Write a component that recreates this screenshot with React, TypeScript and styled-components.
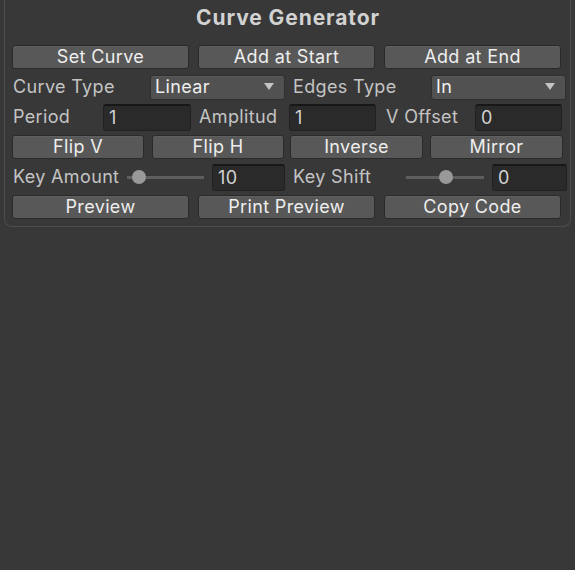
import React from "react";
import styled, { createGlobalStyle } from "styled-components";

const Global = createGlobalStyle`
  html, body { margin: 0; padding: 0; background: #383838; }
  body { font-family: Inter, "Noto Sans", sans-serif; font-size: 18px; color: #c4c4c4; letter-spacing: 0.35px; }
  * { box-sizing: border-box; }
`;

const Page = styled.div`
  width: 575px;
  height: 570px;
  background: #383838;
  padding: 0 4px;
`;

const Panel = styled.div`
  border: 1px solid #4e4e4e;
  border-top: none;
  border-radius: 0 0 8px 8px;
  padding: 0 4px 4px 7px;
  display: flex;
  flex-direction: column;
`;

const Title = styled.div`
  height: 42px;
  display: flex;
  justify-content: center;
  align-items: center;
  padding-bottom: 8px;
  padding-right: 2px;
  font-weight: 700;
  font-size: 21px;
  color: #d2d2d2;
  letter-spacing: 0.9px;
`;

const Row = styled.div<{ $cols: string; $gap?: number }>`
  height: 30px;
  display: grid;
  grid-template-columns: ${(p) => p.$cols};
  column-gap: ${(p) => p.$gap ?? 0}px;
  align-items: center;
`;

const Button = styled.button`
  height: 24px;
  margin: 0;
  padding: 0 0 1px;
  border: 1px solid #2a2a2a;
  border-radius: 3px;
  background: #585858;
  color: #eeeeee;
  font-family: inherit;
  font-size: 18px;
  letter-spacing: 0.35px;
  line-height: 20px;
  text-align: center;
  white-space: nowrap;
  box-shadow: inset 0 1px 0 #606060;
`;

const Label = styled.div`
  color: #c4c4c4;
  font-size: 18px;
  white-space: nowrap;
  overflow: hidden;
  padding: 0 0 2px 1px;
`;

const Dropdown = styled.div`
  height: 25px;
  border: 1px solid #2f2f2f;
  border-radius: 3px;
  background: #515151;
  color: #eeeeee;
  display: flex;
  align-items: center;
  justify-content: space-between;
  padding: 0 10px 1px 4px;
  box-shadow: inset 0 1px 0 #595959;
`;

const Arrow = styled.span`
  width: 0;
  height: 0;
  border-left: 5.5px solid transparent;
  border-right: 5.5px solid transparent;
  border-top: 7px solid #c4c4c4;
`;

const Field = styled.div`
  height: 27px;
  border: 1px solid #212121;
  border-top: 2px solid #171717;
  border-radius: 3px;
  background: #2a2a2a;
  color: #d2d2d2;
  display: flex;
  align-items: center;
  padding: 0 0 1px 5px;
`;

const SliderBox = styled.div`
  position: relative;
  height: 14px;
  display: flex;
  align-items: center;
`;

const Track = styled.div`
  width: 100%;
  height: 3px;
  background: #5e5e5e;
`;

const Thumb = styled.div<{ $at: number }>`
  position: absolute;
  top: 0;
  left: ${(p) => p.$at}px;
  width: 14px;
  height: 14px;
  border-radius: 50%;
  background: #999999;
`;

export default function App() {
  return (
    <>
      <Global />
      <Page>
        <Panel>
          <Title>Curve Generator</Title>
          <Row $cols="177px 177px 177px" $gap={9}>
            <Button>Set Curve</Button>
            <Button>Add at Start</Button>
            <Button>Add at End</Button>
          </Row>
          <Row $cols="138px 135px 7px 139px 135px">
            <Label>Curve Type</Label>
            <Dropdown>
              Linear <Arrow />
            </Dropdown>
            <span />
            <Label>Edges Type</Label>
            <Dropdown>
              In <Arrow />
            </Dropdown>
          </Row>
          <Row $cols="91px 88px 7px 91px 87px 9px 90px 87px">
            <Label>Period</Label>
            <Field>1</Field>
            <span />
            <Label>Amplitud</Label>
            <Field>1</Field>
            <span />
            <Label>V Offset</Label>
            <Field>0</Field>
          </Row>
          <Row $cols="132px 8px 132px 6px 133px 7px 133px">
            <Button>Flip V</Button>
            <span />
            <Button>Flip H</Button>
            <span />
            <Button>Inverse</Button>
            <span />
            <Button>Mirror</Button>
          </Row>
          <Row $cols="115px 77px 8px 73px 7px 114px 78px 8px 75px">
            <Label>Key Amount</Label>
            <SliderBox>
              <Track />
              <Thumb $at={5} />
            </SliderBox>
            <span />
            <Field>10</Field>
            <span />
            <Label>Key Shift</Label>
            <SliderBox>
              <Track />
              <Thumb $at={33} />
            </SliderBox>
            <span />
            <Field>0</Field>
          </Row>
          <Row $cols="177px 177px 177px" $gap={9}>
            <Button>Preview</Button>
            <Button>Print Preview</Button>
            <Button>Copy Code</Button>
          </Row>
        </Panel>
      </Page>
    </>
  );
}
